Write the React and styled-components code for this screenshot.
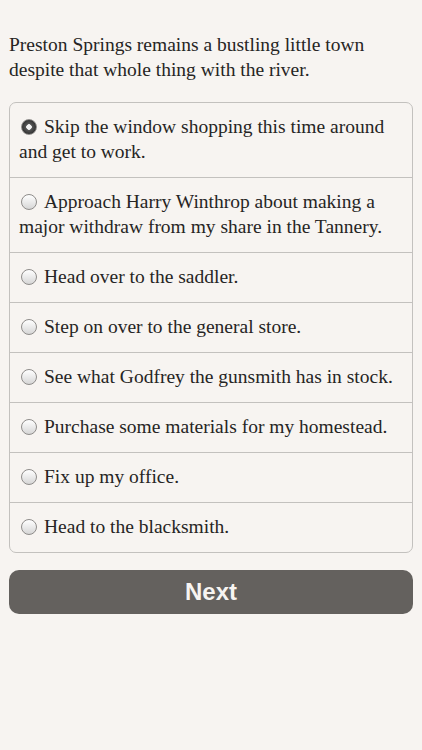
import React, { useState } from 'react';
import styled, { createGlobalStyle } from 'styled-components';

const GlobalStyle = createGlobalStyle`
    body {
        margin: 0;
        background: #f7f4f1;
    }
`;

const Page = styled.div`
    padding: 32px 9px 0;
    font-family: 'Liberation Serif', 'Times New Roman', serif;
    color: #262524;
`;

const Intro = styled.p`
    margin: 0 0 20px;
    padding-right: 24px;
    font-size: 19.5px;
    line-height: 25px;
`;

const Choices = styled.div`
    border: 1px solid #c3c1be;
    border-radius: 7px;
    overflow: hidden;
`;

const Choice = styled.label`
    display: block;
    padding: 11px 9px 13px;
    font-size: 19.5px;
    line-height: 25px;
    border-top: ${p => (p.$first ? 'none' : '1px solid #c3c1be')};
    cursor: pointer;
`;

const Radio = styled.span`
    display: inline-block;
    width: 16px;
    height: 16px;
    margin: 0 7px 0 2px;
    border-radius: 50%;
    vertical-align: -2px;
    box-sizing: border-box;
    border: 1px solid #8e8c8a;
    background: ${p => (p.$on
        ? 'radial-gradient(circle, #f2f2f2 0 2.5px, #555 3px, #333 7px)'
        : 'linear-gradient(#ffffff, #d6d6d6)')};
`;

const NextButton = styled.button`
    display: block;
    width: 100%;
    height: 44px;
    margin-top: 17px;
    border: none;
    border-radius: 10px;
    background: #64615e;
    color: #f7f4f1;
    font-family: 'Liberation Sans', Arial, sans-serif;
    font-weight: bold;
    font-size: 24px;
`;

const options = [
    'Skip the window shopping this time around and get to work.',
    'Approach Harry Winthrop about making a major withdraw from my share in the Tannery.',
    'Head over to the saddler.',
    'Step on over to the general store.',
    'See what Godfrey the gunsmith has in stock.',
    'Purchase some materials for my homestead.',
    'Fix up my office.',
    'Head to the blacksmith.',
];

const App = () => {
    const [picked, setPicked] = useState(0);

    return (
        <>
            <GlobalStyle />
            <Page>
                <Intro>
                    Preston Springs remains a bustling little town despite that whole thing with the river.
                </Intro>
                <Choices>
                    {options.map((text, i) => (
                        <Choice key={i} $first={i === 0} onClick={() => setPicked(i)}>
                            <Radio $on={picked === i} />
                            {text}
                        </Choice>
                    ))}
                </Choices>
                <NextButton>Next</NextButton>
            </Page>
        </>
    );
};

export default App;
